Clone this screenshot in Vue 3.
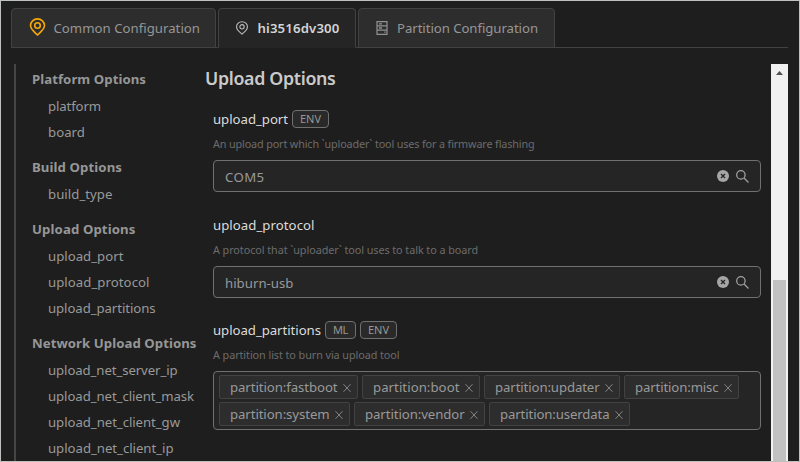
<script setup>
const groups = [
  { name: 'Platform Options', w: 114, items: [['platform', 53], ['board', 37]] },
  { name: 'Build Options', w: 90, items: [['build_type', 64.5]] },
  { name: 'Upload Options', w: 103.5, items: [['upload_port', 75.5], ['upload_protocol', 101.5], ['upload_partitions', 107.5]] },
  {
    name: 'Network Upload Options',
    w: 164.5,
    items: [['upload_net_server_ip', 129.5], ['upload_net_client_mask', 146], ['upload_net_client_gw', 132], ['upload_net_client_ip', 125.5]]
  }
]
const fields = [
  { name: 'upload_port', w: 75, badges: ['ENV'], desc: 'An upload port which `uploader` tool uses for a firmware flashing', dw: 321.5, value: 'COM5', vw: 39.5 },
  { name: 'upload_protocol', w: 101.5, badges: [], desc: 'A protocol that `uploader` tool uses to talk to a board', dw: 265, value: 'hiburn-usb', vw: 68.5 },
  {
    name: 'upload_partitions',
    w: 108,
    badges: ['ML', 'ENV'],
    desc: 'A partition list to burn via upload tool',
    dw: 186.5,
    tags: [['fastboot', 107.5], ['boot', 86.5], ['updater', 104.5], ['misc', 83.5], ['system', 99.5], ['vendor', 99.5], ['userdata', 109.5]]
  }
]
const badgeWidth = { ENV: 21, ML: 15 }

// Spaces the letters of a label so that it fills the given width.
const vFit = {
  mounted(el, { value }) {
    const apply = () => {
      el.style.letterSpacing = '0px'
      const natural = el.getBoundingClientRect().width
      el.style.letterSpacing = (value - natural) / el.textContent.length + 'px'
    }
    apply()
    document.fonts.ready.then(apply)
  }
}
</script>

<template>
  <div class="window">
    <nav class="tabs">
      <div class="tab common">
        <svg class="pin big" viewBox="0 0 16 18"><path d="M8 17C5.5 14.5 1 11.5 1 7.6A7 6.7 0 0 1 15 7.6C15 11.5 10.5 14.5 8 17Z" /><circle cx="8" cy="7.5" r="2.8" /></svg>
        <span v-fit="146.5">Common Configuration</span>
      </div>
      <div class="tab active">
        <svg class="pin" viewBox="0 0 16 18"><path d="M8 17C5.5 14.5 1 11.5 1 7.6A7 6.7 0 0 1 15 7.6C15 11.5 10.5 14.5 8 17Z" /><circle cx="8" cy="7.5" r="2.8" /></svg>
        <span v-fit="82">hi3516dv300</span>
      </div>
      <div class="tab partition">
        <svg class="disk" viewBox="0 0 12 14"><path d="M1 .7H11V13.3H1ZM1 4.9H11M1 9.1H11" /><path class="marks" d="M3 2.8H6M3 7H6M8.3 11.2H9.6" /></svg>
        <span v-fit="141">Partition Configuration</span>
      </div>
    </nav>
    <div class="body">
      <aside class="side">
        <section v-for="g in groups" :key="g.name" class="group">
          <div class="heading"><span v-fit="g.w">{{ g.name }}</span></div>
          <div v-for="i in g.items" :key="i[0]" class="item"><span v-fit="i[1]">{{ i[0] }}</span></div>
        </section>
      </aside>
      <main class="content">
        <h2><span v-fit="130.5">Upload Options</span></h2>
        <section v-for="f in fields" :key="f.name" class="field">
          <div class="label">
            <span v-fit="f.w">{{ f.name }}</span>
            <div class="badges">
              <span v-for="b in f.badges" :key="b" class="badge"><span v-fit="badgeWidth[b]">{{ b }}</span></span>
            </div>
          </div>
          <div class="desc"><span v-fit="f.dw">{{ f.desc }}</span></div>
          <div v-if="f.tags" class="box tags">
            <div v-for="t in f.tags" :key="t[0]" class="tag">
              <span v-fit="t[1]">partition:{{ t[0] }}</span>
              <svg class="close" viewBox="0 0 8 8"><path d="M.5 .2L7.5 7.8M7.5 .2L.5 7.8" /></svg>
            </div>
          </div>
          <div v-else class="box input">
            <span v-fit="f.vw">{{ f.value }}</span>
            <svg class="clear" viewBox="0 0 12 12"><circle cx="6" cy="6" r="6" /><path d="M4 4L8 8M8 4L4 8" /></svg>
            <svg class="search" viewBox="0 0 13 13"><circle cx="4.9" cy="4.9" r="4.2" /><path d="M8 8L12.5 12.5" /></svg>
          </div>
        </section>
      </main>
      <div class="scroll">
        <svg class="arrow" viewBox="0 0 7 4"><path d="M0 4L3.5 0L7 4Z" /></svg>
        <div class="thumb"></div>
      </div>
    </div>
  </div>
</template>

<style>
body { background: #1e1e1e; overflow: hidden; }
</style>

<style scoped>
* { box-sizing: border-box; }
.window {
  width: 800px; height: 462px; overflow: hidden;
  display: flex; flex-direction: column;
  padding: 7px 11px 0 10px;
  border: 1px solid #bec2be;
  background: #1e1e1e; color: #999;
  font: 13.2px/20px "Noto Sans", "Open Sans", sans-serif;
}
span { white-space: nowrap; }
svg { display: block; flex: none; fill: none; }
.tabs { display: flex; gap: 2px; height: 40px; flex: none; background: linear-gradient(#424242, #424242) bottom / 100% 1px no-repeat; }
.tab {
  display: flex; align-items: center; height: 40px;
  border: 1px solid #424242; border-radius: 4px 4px 0 0;
  background: #2d2d2d; color: #969696;
}
.common { width: 205px; padding-left: 16.5px; gap: 8px; }
.active { width: 138px; padding-left: 16px; gap: 8.5px; background: #252526; border-bottom-color: #252526; color: #d4d4d4; font-weight: 600; }
.partition { width: 197px; padding-left: 17px; gap: 9px; }
.pin { width: 14px; height: 14px; stroke: #bcbcbc; stroke-width: 1.4; }
.big { width: 17px; height: 18px; stroke: #f5a70b; stroke-width: 1.6; margin-bottom: 3px; }
.disk { width: 12px; height: 14px; stroke: #929292; stroke-width: 1.2; }
.marks { stroke-width: 1.3; }
.body { display: flex; height: 398px; margin-top: 16px; flex: none; }
.side { width: 187px; margin-left: 3px; padding: 1px 0 0 16px; border-left: 2px solid #454545; flex: none; }
.group { margin-bottom: 8px; }
.heading { height: 28px; line-height: 28px; font-weight: 700; color: #969696; }
.item { height: 26px; line-height: 26px; padding-left: 16px; color: #999; }
.content { width: 556px; margin-left: 4px; flex: none; }
h2 { margin: 0 0 13px; height: 29px; font-size: 17.8px; line-height: 29px; font-weight: 600; color: #cacaca; }
.field { margin: 0 0 20px 8px; }
.field:nth-of-type(2) { margin-bottom: 19px; }
.label { display: flex; align-items: center; height: 26px; color: #dcdcdc; font-weight: 400; }
.badges { display: flex; gap: 4px; margin-left: 4px; }
.badge { height: 18px; line-height: 16px; padding: 0 7px; border: 1px solid #707070; border-radius: 4px; font-size: 11px; color: #979797; background: #292929; }
.desc { height: 28px; line-height: 23px; font-size: 10.8px; color: #6c6c6c; }
.box { width: 548px; border: 1px solid #707070; border-radius: 4px; background: #252526; }
.input { height: 32px; display: flex; align-items: center; padding: 1px 11px 0 11px; color: #999; }
.clear { width: 12px; height: 12px; margin-left: auto; margin-bottom: 1px; fill: #a6a6a6; }
.clear path { stroke: #252526; stroke-width: 1.3; }
.search { width: 13px; height: 13px; margin-left: 7px; margin-bottom: 1px; stroke: #a0a0a0; stroke-width: 1.3; }
.tags { height: 59px; display: flex; flex-wrap: wrap; align-content: flex-start; gap: 3px 4px; padding: 3px 5px; }
.tag { height: 24px; display: flex; align-items: center; gap: 5.5px; padding: 0 6px 0 10px; border: 1px solid #424242; border-radius: 2px; background: #2d2d2d; color: #999; }
.close { width: 8px; height: 8px; margin-top: 1px; stroke: #848484; stroke-width: 1; }
.scroll { width: 17px; margin-left: 10px; flex: none; display: flex; flex-direction: column; align-items: center; background: #f1f1f1; }
.arrow { width: 7px; height: 4px; margin-top: 7px; fill: #505050; }
.thumb { width: 13px; margin-top: 205px; flex: 1; background: #c1c1c1; }
</style>
